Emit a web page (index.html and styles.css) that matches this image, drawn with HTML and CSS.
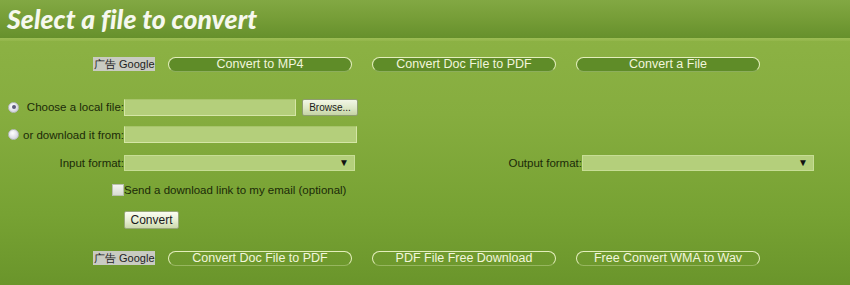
FILE: index.html
```html
<!DOCTYPE html>
<html>
<head>
<meta charset="utf-8">
<link rel="stylesheet" href="styles.css">
</head>
<body>
<div class="page">
  <div class="header"><h1 class="title">Select a file to convert</h1></div>
  <div class="stripe"></div>
  <div class="body">
    <div class="adrow top">
      <div class="adlabel">广告 Google</div>
      <a class="pill solid">Convert to MP4</a>
      <a class="pill solid">Convert Doc File to PDF</a>
      <a class="pill solid">Convert a File</a>
    </div>

    <div class="row r-local">
      <div class="lab"><span class="radio checked"></span><span class="ltxt">Choose a local file:</span></div>
      <div class="input short"></div>
      <div class="browse">Browse...</div>
    </div>
    <div class="row r-url">
      <div class="lab"><span class="radio"></span><span class="ltxt">or download it from:</span></div>
      <div class="input long"></div>
    </div>
    <div class="row r-format">
      <div class="lab"><span class="ltxt">Input format:</span></div>
      <div class="select in"><span class="arrow">▼</span></div>
      <div class="outlab">Output format:</div>
      <div class="select out"><span class="arrow">▼</span></div>
    </div>
    <div class="row r-mail">
      <span class="check"></span><span class="mailtxt">Send a download link to my email (optional)</span>
    </div>
    <div class="row r-convert">
      <div class="convert">Convert</div>
    </div>

    <div class="adrow bottom">
      <div class="adlabel">广告 Google</div>
      <a class="pill">Convert Doc File to PDF</a>
      <a class="pill">PDF File Free Download</a>
      <a class="pill">Free Convert WMA to Wav</a>
    </div>
  </div>
</div>
</body>
</html>
```

FILE: styles.css
```css
html, body {
  margin: 0;
  padding: 0;
}
body {
  width: 850px;
  height: 285px;
  overflow: hidden;
  font-family: "Liberation Sans", Arial, sans-serif;
}
.page {
  width: 850px;
  height: 285px;
  display: flex;
  flex-direction: column;
  background: linear-gradient(180deg, #8fb446 0%, #86ad3f 40%, #77a233 75%, #6a952b 100%);
}
.header {
  height: 38px;
  background: linear-gradient(180deg, #82a843 0%, #779e38 45%, #66902c 100%);
  display: flex;
  align-items: center;
}
.title {
  margin: 0 0 0 7px;
  font-family: Lato, "Open Sans", sans-serif;
  font-weight: 900;
  font-style: italic;
  font-size: 26.5px;
  color: #f6f8ee;
  letter-spacing: 0.1px;
  line-height: 36px;
}
.stripe {
  height: 3px;
  background: linear-gradient(180deg, #9cbd55, #93b64b);
}
.body {
  flex: 1;
  display: flex;
  flex-direction: column;
}
.adrow {
  display: flex;
  align-items: center;
  padding-left: 93px;
  height: 16px;
}
.adrow.top {
  margin-top: 15px;
}
.adrow.bottom {
  margin-top: 21px;
}
.adlabel {
  width: 62px;
  height: 14px;
  background: #c9cbc2;
  color: #1e1e1e;
  font-size: 11px;
  line-height: 14px;
  white-space: nowrap;
  overflow: hidden;
  padding-left: 1px;
  box-sizing: border-box;
  margin-right: 13px;
}
.pill {
  width: 184px;
  height: 15px;
  box-sizing: border-box;
  margin-right: 20px;
  border: 1.5px solid #e4eebc;
  border-bottom-color: rgba(228, 238, 188, 0.35);
  border-radius: 8px;
  color: #f2f6dc;
  font-size: 12.5px;
  line-height: 12px;
  text-align: center;
  white-space: nowrap;
}
.pill.solid {
  background: #5f8c28;
}
.row {
  display: flex;
  align-items: center;
  font-size: 11.5px;
  color: #1b2a08;
}
.lab {
  width: 124px;
  display: flex;
  align-items: center;
  padding-left: 8px;
  box-sizing: border-box;
}
.ltxt {
  flex: 1;
  text-align: right;
  white-space: nowrap;
}
.radio {
  width: 11px;
  height: 11px;
  border-radius: 50%;
  background: radial-gradient(circle at 40% 35%, #ffffff, #d8d8e2 70%);
  border: 1px solid #b8bcc0;
  box-sizing: border-box;
  position: relative;
  flex: none;
}
.radio.checked::after {
  content: "";
  position: absolute;
  left: 2.5px;
  top: 2.5px;
  width: 4px;
  height: 4px;
  border-radius: 50%;
  background: #5c5c7a;
}
.r-local {
  margin-top: 26px;
  height: 18px;
}
.r-url {
  margin-top: 10px;
  height: 17px;
}
.r-format {
  margin-top: 12px;
  height: 16px;
}
.r-mail {
  margin-top: 12px;
  height: 14px;
  padding-left: 112px;
}
.r-convert {
  margin-top: 13px;
  height: 19px;
  padding-left: 124px;
}
.input {
  height: 17px;
  box-sizing: border-box;
  background: #b4cf7b;
  border: 1px solid #d5e6a6;
  border-top-color: #a7c46a;
}
.input.short {
  width: 172px;
}
.input.long {
  width: 233px;
}
.browse {
  margin-left: 6px;
  width: 56px;
  height: 17px;
  box-sizing: border-box;
  background: linear-gradient(180deg, #f2f6e6 0%, #dde8c6 55%, #c4d3a4 100%);
  border: 1px solid #8e9d70;
  border-radius: 2px;
  color: #1a1a1a;
  font-size: 10px;
  line-height: 15px;
  text-align: center;
}
.select {
  height: 16px;
  box-sizing: border-box;
  background: #b4cf7b;
  border: 1px solid #c7dd95;
  position: relative;
}
.select.in {
  width: 231px;
}
.select.out {
  width: 232px;
}
.arrow {
  position: absolute;
  right: 5px;
  top: 0;
  font-size: 10px;
  line-height: 14px;
  color: #111;
}
.outlab {
  width: 227px;
  text-align: right;
  white-space: nowrap;
}
.check {
  width: 12px;
  height: 12px;
  box-sizing: border-box;
  background: linear-gradient(180deg, #f4f4f0, #d8dcd0);
  border: 1px solid #b9bfae;
  flex: none;
}
.mailtxt {
  white-space: nowrap;
}
.convert {
  width: 55px;
  height: 18px;
  box-sizing: border-box;
  background: linear-gradient(180deg, #fbfdf2 0%, #e6eed2 55%, #ccd9ad 100%);
  border: 1px solid #98a87a;
  border-radius: 2px;
  font-size: 12px;
  line-height: 16px;
  text-align: center;
  color: #1a1a1a;
}
```
